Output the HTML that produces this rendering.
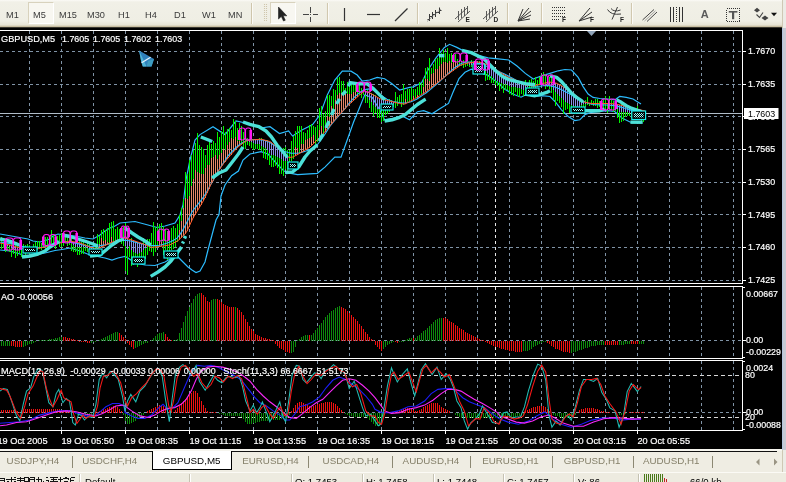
<!DOCTYPE html>
<html><head><meta charset="utf-8"><title>GBPUSD,M5</title>
<style>
html,body{margin:0;padding:0;}
#tb,#tabs,#status,svg{will-change:transform;}
body{width:786px;height:482px;overflow:hidden;background:#efede2;font-family:"Liberation Sans",sans-serif;font-size:9.2px;color:#222;position:relative;}
#tb{position:absolute;left:0;top:0;width:782px;height:28px;background:linear-gradient(#fbfaf6 0,#f1f0e7 2px,#efeee4 21px,#e6e3d4 25px,#c9bfa2 26.5px,#3a3830 27.5px,#000 28px);}
.tbt{position:absolute;top:9.5px;font-size:9.2px;color:#3a3a3a;line-height:10px;}
.pressed{position:absolute;top:2px;height:22px;box-sizing:border-box;border:1px solid #d8d2bd;border-right-color:#fff;border-bottom-color:#fff;background:#f8f7f1;}
.sep{position:absolute;top:3px;width:1px;height:21px;background:#cfc6ac;box-shadow:1px 0 0 #fbfaf6;}
#tabs{position:absolute;left:0;top:449px;width:782px;height:23px;background:#efede3;border-top:2px solid #f6f5ee;box-sizing:border-box;}
#tline{position:absolute;left:0;top:0;width:777px;height:1px;background:#111;}
.tab{position:absolute;top:5px;font-size:9.8px;color:#85806a;line-height:10px;}
.tsep{position:absolute;top:4.5px;width:1px;height:12px;background:#8c8873;}
#atab{position:absolute;left:152px;top:0px;width:80px;height:19px;box-sizing:border-box;background:#fff;border:1px solid #000;border-top:none;}
#status{position:absolute;left:0;top:472px;width:786px;height:10px;background:#edebe0;border-top:1px solid #fbfaf5;box-sizing:border-box;overflow:hidden;}
.st{position:absolute;top:4.2px;font-size:9.6px;color:#000;line-height:10px;}
.ssep{position:absolute;top:1px;width:1px;height:10px;background:#c5c2b2;box-shadow:1px 0 0 #fff;}
#redge{position:absolute;left:782px;top:0;width:4px;height:482px;background:#ecebe6;border-left:1px solid #cfc8b4;box-sizing:border-box;}
</style></head><body>
<div id="redge"></div>
<div id="tb">
 <span class="tbt" style="left:6px">M1</span>
 <div class="pressed" style="left:28px;width:26px"></div>
 <span class="tbt" style="left:33px">M5</span>
 <span class="tbt" style="left:59px">M15</span>
 <span class="tbt" style="left:87px">M30</span>
 <span class="tbt" style="left:118px">H1</span>
 <span class="tbt" style="left:145px">H4</span>
 <span class="tbt" style="left:174px">D1</span>
 <span class="tbt" style="left:202px">W1</span>
 <span class="tbt" style="left:228px">MN</span>
 <div class="sep" style="left:251px"></div>
 <div class="pressed" style="left:270px;width:26px"></div>
 <svg width="786" height="28" style="position:absolute;left:0;top:0" fill="none" stroke="#444" stroke-width="1.1">
  <path d="M264.5 4v18M266.5 4v18" stroke="#cfc6ac" stroke-dasharray="1 1"/>
  <path d="M278.5 7V19L281.3 16.4L283.5 21L285.3 20.2L283.2 15.8H286.8Z" fill="#222" stroke="#222" stroke-width="0.6"/>
  <path d="M310.5 7V12.5M310.5 16.5V22M303 14.5H308.5M312.5 14.5H318M310 14.5h1" stroke="#444" stroke-width="1" shape-rendering="crispEdges"/>
  <path d="M327.5 3V24" stroke="#cfc6ac"/><path d="M328.5 3V24" stroke="#fbfaf6"/>
  <path d="M344.5 8V21" stroke="#333" stroke-width="1.2"/>
  <path d="M367 14.5H380" stroke="#333" stroke-width="1.2"/>
  <path d="M395 21L407.5 8.5" stroke="#333" stroke-width="1.2"/>
  <path d="M417.5 3V24" stroke="#cfc6ac"/><path d="M418.5 3V24" stroke="#fbfaf6"/>
  <!-- channel icons -->
  <g stroke="#3a3a3a" stroke-width="1"><path d="M429.5 14V21M432.5 12V19M435.5 10V17M439.5 7.5V14M427.5 19.5h2M429.5 16.5h3M432.5 14.5h3M435.5 12.5h4M439.5 10.5h2"/><path d="M427 21.5L441 9" stroke="#777" stroke-width="0.6"/></g>
  <g stroke="#4a4a4a" stroke-width="0.9"><path d="M455 19L467 8M458 22L470 11M458.5 11v9M461.5 9v9M464.5 7v9M467.5 6v8"/></g>
  <g stroke="#4a4a4a" stroke-width="0.9"><path d="M483 19L495 8M486 22L498 11M486.5 11v9M489.5 9v9M492.5 7v9M495.5 6v8"/></g>
  <path d="M507.5 3V24" stroke="#cfc6ac"/><path d="M508.5 3V24" stroke="#fbfaf6"/>
  <g stroke="#333" stroke-width="1"><path d="M518 21L529 8M518 21L531 11M518 21L531 15M518 21L530 19M518 21L523 9"/></g>
  <path d="M541.5 3V24" stroke="#cfc6ac"/><path d="M542.5 3V24" stroke="#fbfaf6"/>
  <g stroke="#333" stroke-width="1" stroke-dasharray="1 1"><path d="M552 7.5H565M552 10.5H565M552 13.5H565M552 16.5H565M552 19.5H560"/></g>
  <g stroke="#333" stroke-width="1"><path d="M579 21L590 8M579 21L592 12M579 21L592 17"/></g>
  <g stroke="#3a3a3a" stroke-width="1"><path d="M607.5 9.5Q611 15.5 621 14M617.5 7L612 19.5M611 8.5Q614 12.5 620.5 10"/></g>
  <path d="M631.5 3V24" stroke="#cfc6ac"/><path d="M632.5 3V24" stroke="#fbfaf6"/>
  <g stroke="#444" stroke-width="1"><path d="M642.5 20L654 9.5M647 21.5L657 12"/><path d="M644.5 21L655.5 10.8" stroke="#888" stroke-width="0.7"/></g>
  <g stroke="#333" stroke-width="1"><path d="M670.5 7V22M673.5 7V22M679.5 7V22M682.5 7V22"/><path d="M676.5 7V22" stroke-dasharray="1 1"/></g>
  <g stroke="#333" stroke-width="1" stroke-dasharray="1 1" shape-rendering="crispEdges"><path d="M726.5 8.5H739.5V21.5H726.5Z"/></g>
  <path d="M728.8 11.8H737.4" stroke="#555" stroke-width="1.6"/><path d="M733.1 11V19.2" stroke="#555" stroke-width="2.2"/>
  <path d="M754 10.2L757 7.8L760 10.2L757 12.6ZM761.5 18L765 15.4L768.5 18L765 20.6Z" fill="#444" stroke="none"/>
  <path d="M756.5 14.5L759.5 17.5L763 12.5" stroke="#444"/>
  <path d="M771 12.8H777L774 16.2Z" fill="#111" stroke="none"/>
 </svg>
 <span class="tbt" style="left:700.8px;top:7.4px;font-size:11px;font-weight:bold;color:#5a5a5a;line-height:14px">A</span>
 <span class="tbt" style="left:465.5px;top:17px;font-size:6.5px;font-weight:bold;color:#222;line-height:6px">E</span>
 <span class="tbt" style="left:493.5px;top:17px;font-size:6.5px;font-weight:bold;color:#222;line-height:6px">D</span>
 <span class="tbt" style="left:562px;top:17px;font-size:6.5px;font-weight:bold;color:#222;line-height:6px">F</span>
 <span class="tbt" style="left:590px;top:17px;font-size:6.5px;font-weight:bold;color:#222;line-height:6px">F</span>
 <span class="tbt" style="left:620px;top:17px;font-size:6.5px;font-weight:bold;color:#222;line-height:6px">F</span>
</div>
<svg width="786" height="422" viewBox="0 28 786 422" style="position:absolute;left:0;top:28px">
<rect x="0" y="28" width="786" height="422" fill="#000"/>
<g stroke="#8093a6" stroke-width="1" stroke-dasharray="3 3" shape-rendering="crispEdges" fill="none">
<path d="M29.5 31V283M29.5 287V358M29.5 361V430M61.5 31V283M61.5 287V358M61.5 361V430M93.5 31V283M93.5 287V358M93.5 361V430M125.5 31V283M125.5 287V358M125.5 361V430M157.5 31V283M157.5 287V358M157.5 361V430M189.5 31V283M189.5 287V358M189.5 361V430M221.5 31V283M221.5 287V358M221.5 361V430M253.5 31V283M253.5 287V358M253.5 361V430M285.5 31V283M285.5 287V358M285.5 361V430M317.5 31V283M317.5 287V358M317.5 361V430M349.5 31V283M349.5 287V358M349.5 361V430M381.5 31V283M381.5 287V358M381.5 361V430M413.5 31V283M413.5 287V358M413.5 361V430M445.5 31V283M445.5 287V358M445.5 361V430M477.5 31V283M477.5 287V358M477.5 361V430M509.5 31V283M509.5 287V358M509.5 361V430M541.5 31V283M541.5 287V358M541.5 361V430M573.5 31V283M573.5 287V358M573.5 361V430M605.5 31V283M605.5 287V358M605.5 361V430M637.5 31V283M637.5 287V358M637.5 361V430M669.5 31V283M669.5 287V358M669.5 361V430M701.5 31V283M701.5 287V358M701.5 361V430M733.5 31V283M733.5 287V358M733.5 361V430M0 51.5H742M0 84.5H742M0 116.5H742M0 149.5H742M0 182.5H742M0 214.5H742M0 247.5H742M0 280.5H742M0 340.5H742M0 412.5H742"/>
</g>
<path d="M495.5 31V283M495.5 287V358M495.5 361V430" stroke="#e8e8e8" stroke-width="1" stroke-dasharray="3 3" shape-rendering="crispEdges"/>
<path d="M0 375.5H742M0 417.5H742" stroke="#d8d8d8" stroke-width="1" stroke-dasharray="4 3" shape-rendering="crispEdges"/>
<path d="M0 113.5H742" stroke="#b0bcc8" stroke-width="1" shape-rendering="crispEdges"/>
<polyline points="0,234 17,237 28,239 33,241 40,242 50,239 53,236 58,234 75,236 85,238 93,239 100,235 105,231 110,228 115,226 120,223 135,221.5 148,225 157,227.5 165,226 175,223 180,215 183,205 186,180 190,160 195,140 200,134.6 213,126.7 225,134.6 236,121 250,124 261,128 270,126.7 279.5,133.5 288.6,131 292.5,136 302.4,129.7 312.4,124.8 320,114.8 327.3,94.9 334.8,80 342.3,71.2 351,71.2 357.2,75 362.2,81.2 369.7,80 377.2,77.4 384.6,78.7 392,83.7 399.6,90 409.5,87.4 413.3,86.8 421.6,82.7 427.8,70.2 436,57.8 444.4,47.4 449.6,44.3 456.8,47.4 465,51.6 475.5,54.7 488,57.8 498.3,58.8 508.7,60 517,66 525.3,73.4 533.3,79 541.6,75.8 550,73.3 558.2,70.8 564.9,69.5 571.5,70 578.2,77.4 583.1,86.6 588.1,94 593.1,97.4 599.8,98.5 608,99 614.7,99.9 619.7,96.5 626.3,97.4 633,99 641,104" fill="none" stroke="#2cbcff" stroke-width="1.2"/>
<polyline points="0,250 10,251 20,254 28,257 35,255 45,253 55,250.5 62,249.5 70,248 80,251 90,255 100,257 105,258 112,260 118,258 125,256.5 128,258 135,263 145,265 155,265.5 165,262 172,258 178,257 183,262 188,267 192,270 196,272.5 200,271 205,262 208,250 212,235 216,220 219,214.5 221,196 225,185 231.6,175.7 238.4,171 243,160 250,154 261,151.7 268,154 277,164 284,171 291,173.4 297.5,174.6 317.4,173.3 324.9,167.1 334.8,157.1 341,157.1 347.3,139.7 353.5,122.3 359.7,107.3 364.7,94.9 372.2,97.4 379.6,109.8 384.6,119.8 392.1,118.5 402,116 409.5,119.8 411.2,118 417.4,111.7 423.7,110.7 432,113.8 440.2,108.6 448.5,103.4 452.7,93 459,78.5 465,72.3 471.3,69.2 479.6,72.3 488,75.4 496.2,81.6 504.5,88.9 512.8,94 521,97.2 529.4,93 535,96.5 541.6,95.7 550,96.5 555,101.5 561.5,109.8 568.2,116.5 574.8,120.6 579.8,119.8 584.8,114.8 591.4,112.3 599.8,111.5 608,110.6 614.7,111.5 622,118 630,122 641,123" fill="none" stroke="#2cbcff" stroke-width="1.2"/>
<path d="M1.5 236.7V249.2M3.5 241.5V248.4M5.5 239.3V251.9M7.5 242.5V250.8M9.5 245.7V252.2M11.5 243.3V257M13.5 239.5V254.1M15.5 242.5V257.7M17.5 244.5V256M19.5 246V253.3M21.5 247.1V256.5M23.5 244.2V252.9M25.5 245.3V255.9M27.5 243.6V252.2M29.5 244.7V254.2M31.5 247.4V251.4M33.5 243.8V251.2M35.5 242.3V252.2M37.5 241V249.9M39.5 240.5V249.4M41.5 242.6V249.6M43.5 242.9V247M45.5 236.8V250.1M47.5 237.2V250.6M49.5 238.5V245.8M51.5 230.3V248.1M53.5 235.2V246.2M55.5 237.1V248.8M57.5 236.4V244.3M59.5 234.8V246.6M61.5 232.9V247M63.5 234.9V245.6M65.5 234.3V241.8M67.5 235.6V245.6M69.5 236.3V245.4M71.5 237.4V250.7M73.5 242.1V251.5M75.5 239.9V251.9M77.5 242.4V254.9M79.5 240.5V254.7M81.5 242.1V253.5M83.5 241.8V254.2M85.5 243.9V250.5M87.5 243.1V251.6M89.5 242V252.4M91.5 247V255.5M93.5 243.6V254.3M95.5 243.8V251.6M97.5 234.1V249.8M99.5 235.6V246.1M101.5 230.1V242.2M103.5 229V244.5M105.5 229.9V241.9M107.5 228V242.4M109.5 223.2V245.7M111.5 222.1V239.7M113.5 220.6V242.7M115.5 228.8V242.5M117.5 227.4V239.7M119.5 229.3V240.9M121.5 231.9V244.1M123.5 227.2V245.6M125.5 223.1V270.8M127.5 228.6V275.4M129.5 239.2V256.6M131.5 237.8V266.2M133.5 245.6V264.6M135.5 250.5V264M137.5 250.3V266.7M139.5 245.5V263.1M141.5 248.3V263M143.5 238V257M145.5 239.8V259.4M147.5 239.1V254.8M149.5 239.1V251.3M151.5 233V251.9M153.5 222.1V255.5M155.5 226.7V252.1M157.5 225.5V246.5M159.5 224.2V242.9M161.5 222.5V244.1M163.5 226.8V254.6M165.5 228.6V250.4M167.5 230.9V259.6M169.5 232.8V257.6M171.5 228.1V249.7M173.5 226.4V249.3M175.5 227.7V247.1M177.5 223.8V242.2M179.5 215.2V236.3M181.5 208V227.2M183.5 198.6V211.8M185.5 171.6V203.4M187.5 173.5V201.1M189.5 159.6V198.3M191.5 155V193.6M193.5 150.3V180.1M195.5 143.4V179.7M197.5 133.2V179M199.5 144.5V178.4M201.5 146.7V181.2M203.5 149.4V180.8M205.5 155.2V178.4M207.5 145V166.5M209.5 142.1V171.6M211.5 143.6V161.5M213.5 141.4V159.8M215.5 142.6V160.4M217.5 132.1V164.6M219.5 136.6V159.4M221.5 131.3V155.2M223.5 126.2V153.7M225.5 131.6V156.7M227.5 128.5V153.6M229.5 127.6V144.4M231.5 129.6V143.9M233.5 118.6V143.5M235.5 121.2V141.3M237.5 127.9V144.6M239.5 123.2V141.7M241.5 126.3V145.1M243.5 132.2V148.6M245.5 131V148.7M247.5 137.8V145M249.5 139.4V146.4M251.5 134.5V148.3M253.5 139.2V150.3M255.5 141.4V149.2M257.5 142.7V148.9M259.5 138.4V149.7M261.5 137.8V151M263.5 144.6V157.7M265.5 145.9V159.1M267.5 139.5V159.7M269.5 143.8V165.4M271.5 149V166.7M273.5 151.6V167.2M275.5 143.7V166.1M277.5 151.1V167.7M279.5 153.9V173.5M281.5 151.9V173.5M283.5 147.9V175.9M285.5 146.8V169.1M287.5 150.3V171.7M289.5 150.1V167.6M291.5 140.9V160.7M293.5 136.1V159.1M295.5 131V152.6M297.5 126.3V150.9M299.5 125.6V154M301.5 125.5V150.7M303.5 132.2V148.5M305.5 133.2V143M307.5 129.7V142.9M309.5 125.2V140.7M311.5 123.7V139.9M313.5 126V138.6M315.5 127.1V144.2M317.5 125V141.8M319.5 107.5V132.6M321.5 106.3V130.3M323.5 114.4V134.6M325.5 110.8V126.7M327.5 94.6V120.7M329.5 95.2V117.7M331.5 96.1V111.7M333.5 88.5V110.8M335.5 89.9V107M337.5 77.7V99.7M339.5 76.9V99.1M341.5 81.2V93.8M343.5 81V96.6M345.5 88V99.2M347.5 82.1V94.8M349.5 87V96.6M351.5 82.4V96.5M353.5 84.1V94.2M355.5 84.1V96.9M357.5 82.1V94.1M359.5 85.3V94.5M361.5 87.8V97.5M363.5 89.1V95.3M365.5 92.4V102.9M367.5 88.6V102.5M369.5 89.8V107.8M371.5 93.3V112.3M373.5 93.8V115.8M375.5 95.4V113.3M377.5 106.1V117.5M379.5 105.5V118.1M381.5 96.2V122.2M383.5 98.5V120.5M385.5 97.5V114.8M387.5 99.6V113.9M389.5 98.6V111.5M391.5 100V108.5M393.5 102.4V106.9M395.5 92.3V108.4M397.5 97.1V106.3M399.5 94.8V103.1M401.5 94V106.9M403.5 83.6V104.8M405.5 90.5V101.8M407.5 88.7V101.9M409.5 89.3V101.4M411.5 86.7V101.5M413.5 89.1V97.8M415.5 88.5V98.1M417.5 87.1V95.8M419.5 81.9V95.4M421.5 83.4V94.2M423.5 78V88.5M425.5 68V83.3M427.5 66.8V83.1M429.5 58.1V83.4M431.5 67.6V76.3M433.5 63.5V77.5M435.5 58.6V73.1M437.5 58.1V70.6M439.5 48.4V71M441.5 53V64.8M443.5 50.3V64.3M445.5 52.5V68.3M447.5 48.1V67.1M449.5 54.3V61.5M451.5 52.9V65.5M453.5 54.2V61.9M455.5 53.9V63.1M457.5 58.7V63.6M459.5 60.3V64.8M461.5 60.5V65.7M463.5 59.5V67.7M465.5 62.1V66.8M467.5 60.1V66.4M469.5 63.3V67.3M471.5 59.8V67.3M473.5 60.9V68.1M475.5 62.1V70.7M477.5 62.9V72.1M479.5 61.4V71.9M481.5 66.4V73.8M483.5 63.2V74.5M485.5 69.2V80.5M487.5 70.2V80.4M489.5 63.4V79.9M491.5 72.3V83.2M493.5 71.9V82.7M495.5 76.8V84.7M497.5 75.4V85.7M499.5 76.7V91M501.5 81.1V88.5M503.5 75.4V92.9M505.5 79.8V90.2M507.5 78.8V89.5M509.5 77.6V93.7M511.5 79.9V94.5M513.5 82.7V95.8M515.5 85.7V91.9M517.5 83.9V96.1M519.5 82.5V97M521.5 87.9V94.4M523.5 81.9V95.7M525.5 80.2V94.9M527.5 83.7V91.2M529.5 79.8V92.7M531.5 78.7V90.6M533.5 81.2V90.5M535.5 76.7V87.6M537.5 79.6V87.1M539.5 77.3V84.8M541.5 74.7V84.9M543.5 72.3V86.4M545.5 73.8V88.8M547.5 80.6V86.8M549.5 77.1V88.5M551.5 76.4V92.6M553.5 79.5V100.1M555.5 89.4V105.7M557.5 83.7V100.8M559.5 92.4V102.9M561.5 87.4V107.1M563.5 98.1V114.1M565.5 93.9V109.8M567.5 90.8V108.9M569.5 102.3V113M571.5 98.1V112M573.5 102.7V111.7M575.5 102V114.2M577.5 99.8V113M579.5 98.9V109.7M581.5 100.7V109.7M583.5 100.5V108.3M585.5 100.1V107.3M587.5 96.7V104.9M589.5 102.8V106.3M591.5 99.9V104.7M593.5 100.9V106.1M595.5 99.2V106.1M597.5 99V107.5M599.5 101V106.9M601.5 101.9V106M603.5 99V110M605.5 95.5V108.8M607.5 103.3V112.7M609.5 96.3V108.8M611.5 99.4V110.2M613.5 100.8V111.7M615.5 104.5V110.8M617.5 106.2V118.1M619.5 106V123M621.5 100.7V121.7M623.5 109.9V120.8M625.5 110.6V117.4M627.5 110.8V116M629.5 110.2V116.3M631.5 107V117.5M633.5 108.4V116.7M635.5 109.9V120.1M637.5 105.5V117.5M639.5 112.6V117.8M641.5 109.7V122M643.5 112.9V121.7M645.5 111.6V119.6" stroke="#00f400" stroke-width="1" shape-rendering="crispEdges"/>
<path d="M99.5 243.7V248.1M101.5 238.4V247.3M103.5 241.1V246.4M105.5 239.8V245.5M107.5 241.5V244.5M111.5 236.5V242.6M159.5 239.8V246.6M161.5 241.6V246.3M179.5 229.8V239.7M181.5 220.9V237.7M183.5 207.7V235.8M185.5 198.3V233.8M187.5 199.1V231.1M189.5 195.9V226.7M191.5 185.8V222.4M193.5 178.9V218M195.5 169.6V214.7M197.5 172.1V211.4M199.5 172.6V208.1M201.5 173.5V204.8M203.5 174.4V201.4M205.5 167.9V197.5M207.5 164.8V193M209.5 164.8V188.6M211.5 158.4V184.1M213.5 156.9V180.5M215.5 155.3V177M217.5 158.6V173.4M219.5 155.4V170.2M221.5 152.7V167.3M223.5 149.2V164.3M225.5 150.1V161.7M227.5 145.4V159.3M229.5 142.2V156.9M231.5 137.8V154.5M233.5 138.5V152.3M235.5 137V150.2M237.5 140.9V148.1M239.5 140.7V146.2M295.5 147.4V155.9M297.5 148V154.9M301.5 144.3V152.5M303.5 144.3V151.3M305.5 140.1V150M307.5 139.4V148.8M309.5 138.3V147.6M311.5 136.9V146M313.5 135.1V144M319.5 130.2V138.1M321.5 126.1V136.1M325.5 125.2V131.6M327.5 116V129.2M329.5 116.9V126.8M331.5 106.4V124.4M333.5 109V122M335.5 99.8V119.6M337.5 95.1V117.4M339.5 93.2V115.2M341.5 92.5V113M343.5 93.4V110.7M345.5 94V108.5M347.5 93.6V106.3M349.5 93.7V104.5M351.5 94.3V102.7M353.5 92.4V100.9M355.5 92.3V99.1M357.5 93.6V97.3M405.5 99.4V104M413.5 95.8V99.8M417.5 94.6V97.5M423.5 87.3V93.7M425.5 79.3V92.4M427.5 78.7V91M429.5 80.5V89.3M431.5 73.7V87.7M433.5 72.8V86.1M435.5 69.3V84.5M437.5 68.5V82.9M439.5 66.4V81.3M441.5 63.6V79.7M443.5 62.3V78.2M445.5 62V76.6M447.5 62.6V75M449.5 60.7V73.5M451.5 62.5V72M453.5 60.2V70.5M455.5 60.8V69.1M457.5 62.9V67.7M459.5 63.7V66.4" stroke="#e8876a" stroke-width="1" shape-rendering="crispEdges"/>
<path d="M5.5 244V244.9M7.5 244.4V245.9M9.5 244.8V246.9M11.5 245.3V247.8M13.5 245.9V248.8M15.5 246.5V249.7M17.5 247.1V250.1M19.5 247.7V250M21.5 248.1V249.8M23.5 248.3V249.7M25.5 248.5V249.6M71.5 241.2V243M73.5 241.6V244.9M75.5 242V246.8M77.5 242.4V246.7M79.5 242.8V246.7M81.5 243.4V246.6M83.5 244.2V246.6M85.5 245V246.6M87.5 245.8V247.6M89.5 246.6V248.6M91.5 247.3V249.7M93.5 247.9V248.7M125.5 238V245.9M127.5 238.6V248.8M129.5 239.1V246.4M131.5 239.7V249.7M133.5 240.4V251.9M135.5 241.1V252.8M137.5 241.8V253.8M139.5 242.5V253.3M141.5 243.2V251.5M143.5 243.9V249.7M145.5 244.7V247.8M249.5 140.2V141.5M251.5 140V142.4M253.5 139.9V143.4M255.5 139.7V143.7M257.5 139.5V144.1M259.5 139.4V144.4M261.5 139.2V145.7M263.5 139.7V146.9M265.5 140.2V148.2M267.5 140.7V150.3M269.5 141.2V152.5M271.5 142.3V154.6M273.5 143.8V155.4M275.5 145.4V156.1M277.5 146.9V156.9M279.5 148.5V158M281.5 150.1V159.4M283.5 151.9V160.9M285.5 153.9V161.3M287.5 155.9V160.8M289.5 157.5V158.4M365.5 91.1V95.1M367.5 91.9V97.2M369.5 92.8V99.6M371.5 93.6V102.3M373.5 94.8V105M375.5 95.9V106.8M377.5 97.1V108.6M379.5 98.3V109.1M381.5 98.9V108.1M383.5 99.4V107.1M385.5 99.9V106M387.5 100.4V104.8M389.5 100.9V104.1M391.5 101.4V103.8M393.5 101.9V103.6M469.5 62.9V64.5M471.5 62.6V64.9M473.5 62.4V65.4M475.5 62.1V65.8M477.5 62.1V66.2M479.5 62.2V67.3M481.5 62.4V68.4M483.5 62.9V69.9M485.5 63.8V71.4M487.5 64.6V72.9M489.5 65.6V74.5M491.5 66.8V76.2M493.5 68.1V77.9M495.5 69.3V79.5M497.5 70.5V81M499.5 71.7V82.1M501.5 72.9V82.9M503.5 74.1V83.6M505.5 75.3V84.1M507.5 76.5V84.9M509.5 77.6V85.9M511.5 78.4V86.6M513.5 79.2V87M515.5 80V87.4M517.5 80.8V87.9M519.5 81.6V88.4M521.5 82.7V89M523.5 83.9V89.5M525.5 85V88M527.5 85.2V86.5M549.5 82V83.7M551.5 82.3V86.8M553.5 82.6V89.9M555.5 82.9V92.2M557.5 83.5V93.8M559.5 84.5V95.5M561.5 85.5V97.8M563.5 86.7V100.2M565.5 88V102M567.5 89.3V103.1M569.5 90.6V104.3M571.5 91.8V105.1M573.5 93V105.9M575.5 94.7V106.4M577.5 96.4V106.5M579.5 98.1V106.6M581.5 99.7V105.4M583.5 101V104.2M585.5 102.3V103.5M607.5 103.5V104.2M609.5 103.6V104.7M611.5 103.7V104.8M613.5 103.8V104.8M615.5 103.9V106.2M617.5 104.2V109M619.5 104.8V111.8M621.5 105.2V111.9M623.5 105.8V112.1M625.5 106.4V112.3M627.5 107V112.4M629.5 107.5V112.5M631.5 107.9V113M633.5 108.3V113.4M635.5 108.7V113.8M637.5 109.2V114.1M639.5 109.6V114.5M641.5 110V115M643.5 110.5V115.5M645.5 111V115.8" stroke="#8c8ce6" stroke-width="1" shape-rendering="crispEdges"/>
<polyline points="0,242.2 3,242.5 6,242.9 9,243.4 12,244 15,244.6 18,245.3 21,246.1 24,246.8 27,247.4 30,247.8 33,248.1 36,248 39,247.7 42,247.3 45,246.6 48,245.6 51,244.6 54,243.6 57,242.8 60,242.3 63,242 66,241.9 69,242.1 72,242.4 75,242.9 78,243.6 81,244.4 84,245.2 87,245.9 90,246.4 93,246.6 96,246.5 99,246 102,245.4 105,244.8 108,244.1 111,243.3 114,242.5 117,241.6 120,240.8 123,240.4 126,240.3 129,240.7 132,241.3 135,242.1 138,242.9 141,243.6 144,244.3 147,244.8 150,245.4 153,245.6 156,245.6 159,245.3 162,244.7 165,243.7 168,242.7 171,241.4 174,240 177,238.2 180,234.4 183,229.6 186,224.1 189,217.9 192,212 195,207.8 198,204.2 201,200.4 204,196.3 207,191.2 210,185.8 213,180.7 216,174.9 219,169.7 222,165.1 225,160.6 228,155.8 231,152.6 234,149.5 237,146.6 240,144.3 243,142.4 246,140.9 249,139.9 252,139.6 255,139.5 258,139.6 261,139.9 264,140.3 267,141.2 270,142.6 273,144.5 276,146.6 279,148.7 282,150.2 285,151.5 288,152.5 291,153.1 294,153.3 297,153.3 300,152.8 303,151.9 306,151 309,149.9 312,148.6 315,146.6 318,143.8 321,140 324,135.7 327,130.9 330,126.2 333,122.3 336,118.8 339,115.4 342,112 345,108.5 348,104.7 351,101 354,97.7 357,94.9 360,92.4 363,90.6 366,89.4 369,88.9 372,89.4 375,90.9 378,92.9 381,95.2 384,97.3 387,99.2 390,100.5 393,101.5 396,102 399,102.5 402,102.9 405,103 408,102.5 411,101.7 414,100.6 417,99 420,97 423,94.9 426,93 429,90.6 432,88.1 435,85.5 438,82.8 441,80.1 444,77.3 447,74.6 450,71.9 453,69.2 456,66.7 459,64.7 462,63.2 465,62.2 468,62 471,62.1 474,62.5 477,63.2 480,64.1 483,65.1 486,66.1 489,67.2 492,68.4 495,69.7 498,71.1 501,72.4 504,73.8 507,75.3 510,76.9 513,78.5 516,80.2 519,81.7 522,82.9 525,84 528,85 531,85.7 534,86.1 537,86.3 540,86.3 543,85.8 546,85.5 549,85.6 552,86.1 555,87 558,88.2 561,89.6 564,91 567,92.5 570,94.1 573,95.8 576,97.5 579,99.2 582,100.8 585,102.1 588,103.2 591,103.9 594,104.5 597,104.8 600,104.9 603,104.9 606,105 609,105.2 612,105.4 615,105.8 618,106.4 621,107.1 624,108 627,108.9 630,109.9 633,110.9 636,111.6 639,112.1" fill="none" stroke="#2cbcff" stroke-width="1.1"/>
<polyline points="0,243 10,245 20,248 30,249 40,248 50,246 60,243 70,241 80,243 90,247 97,249 104,246 110,243 118,240 125,238 132,240 143.3,244 151.6,247.4 159.9,246.5 169.8,244.9 178,240.7 186.4,232.4 193,218 199.7,207 204,199.7 211.2,183.7 217.8,172 223.6,163.4 230.8,154.7 238,147 244,142.3 247.5,140.3 261,139.2 270,141.5 281.7,150.6 288.6,157.5 293,157 297.5,154.6 310,147 322.4,134.7 334.8,119.8 347.3,106 359.7,94.9 364.7,91 371,93.6 379.6,98.6 389.6,101 399.6,103.6 405,104 415.4,98.5 425.7,92 436,83.7 446.5,75.4 454.8,69.2 461,65 468,63 476,62 482,62.5 488,65 498.3,71.3 508.7,77.5 519,81.6 525,85 533,86 541,84 549,82 556,83 562,86 568,90 573,93 580,99 585,102.3 592,103.5 600,103.5 608,103.5 616,104 622,105.5 628,107.3 634,108.5 640,109.8 645,111" fill="none" stroke="#ff5a28" stroke-width="1"/>
<polyline points="0,239 7,240.5 12,242 17,244 21,245.7" fill="none" stroke="#4ce0d8" stroke-width="3.4" stroke-linecap="butt" stroke-linejoin="round"/>
<polyline points="22,257 30,256 38,254 45,251 50,247 55,244 59,241.5" fill="none" stroke="#4ce0d8" stroke-width="3.4" stroke-linecap="butt" stroke-linejoin="round"/>
<polyline points="62,235 70,236.5 78,239 86,241.5 93,244 98,246" fill="none" stroke="#4ce0d8" stroke-width="3.4" stroke-linecap="butt" stroke-linejoin="round"/>
<polyline points="90,256 100,255 106,250 112,245 118,241 124,239" fill="none" stroke="#4ce0d8" stroke-width="3.4" stroke-linecap="butt" stroke-linejoin="round"/>
<polyline points="125,228 132,233 138,237 145,241 150.7,245" fill="none" stroke="#4ce0d8" stroke-width="3.4" stroke-linecap="butt" stroke-linejoin="round"/>
<polyline points="150.7,276.4 158,272 165,267 171,261 177,253 181.5,247" fill="none" stroke="#4ce0d8" stroke-width="3.4" stroke-linecap="butt" stroke-linejoin="round"/>
<polyline points="182.5,243.5 183.5,241.5" fill="none" stroke="#4ce0d8" stroke-width="3.4" stroke-linecap="butt" stroke-linejoin="round"/>
<polyline points="184.5,238.5 185.5,236" fill="none" stroke="#4ce0d8" stroke-width="3.4" stroke-linecap="butt" stroke-linejoin="round"/>
<polyline points="200.8,137 206,139 212.2,141.5" fill="none" stroke="#4ce0d8" stroke-width="3.4" stroke-linecap="butt" stroke-linejoin="round"/>
<polyline points="212,178 219,173 226,170 231.5,163 238.4,154 243,147" fill="none" stroke="#4ce0d8" stroke-width="3.4" stroke-linecap="butt" stroke-linejoin="round"/>
<polyline points="243,122 250,124.4 259,126.7 266,131 271.5,137 277,145 283,152 287.4,157.5" fill="none" stroke="#4ce0d8" stroke-width="3.4" stroke-linecap="butt" stroke-linejoin="round"/>
<polyline points="285,172.5 292.5,172 298.7,167 305,157 310,151 317.4,144.7" fill="none" stroke="#4ce0d8" stroke-width="3.4" stroke-linecap="butt" stroke-linejoin="round"/>
<polyline points="319,141 323,134" fill="none" stroke="#4ce0d8" stroke-width="3.4" stroke-linecap="butt" stroke-linejoin="round"/>
<polyline points="326,128 329,121" fill="none" stroke="#4ce0d8" stroke-width="3.4" stroke-linecap="butt" stroke-linejoin="round"/>
<polyline points="331.5,115 334,109" fill="none" stroke="#4ce0d8" stroke-width="3.4" stroke-linecap="butt" stroke-linejoin="round"/>
<polyline points="336.5,104 339.5,99" fill="none" stroke="#4ce0d8" stroke-width="3.4" stroke-linecap="butt" stroke-linejoin="round"/>
<polyline points="342,95 346,91" fill="none" stroke="#4ce0d8" stroke-width="3.4" stroke-linecap="butt" stroke-linejoin="round"/>
<polyline points="348,86 351,82.5" fill="none" stroke="#4ce0d8" stroke-width="3.4" stroke-linecap="butt" stroke-linejoin="round"/>
<polyline points="348.5,82.4 357,83.7 367,83.7 373.4,88.6 379.6,94.9 384.6,99.9" fill="none" stroke="#4ce0d8" stroke-width="3.4" stroke-linecap="butt" stroke-linejoin="round"/>
<polyline points="384.6,121 392,119.8 399.6,117.3 405,114.8 411.2,109.6 417.4,104.5 423.7,100.3 425.7,99.3" fill="none" stroke="#4ce0d8" stroke-width="3.4" stroke-linecap="butt" stroke-linejoin="round"/>
<polyline points="439,55.7 444.4,55.7" fill="none" stroke="#4ce0d8" stroke-width="3.4" stroke-linecap="butt" stroke-linejoin="round"/>
<polyline points="462,50.5 471.3,52.6 477.6,55.7 483.8,58.8 490,65 496.2,71.3 502.4,76.5 508.7,79.6 517,81.6 525.3,83.7 535,84.8" fill="none" stroke="#4ce0d8" stroke-width="3.4" stroke-linecap="butt" stroke-linejoin="round"/>
<polyline points="525,94 535,95.7 541.6,94 546.6,92.4 550,90.7" fill="none" stroke="#4ce0d8" stroke-width="3.4" stroke-linecap="butt" stroke-linejoin="round"/>
<polyline points="550,75.8 556.6,77.4 561.5,81.6 566.5,87.4 571.5,93.2 576.5,97.4 581.5,100.7 583,102.3" fill="none" stroke="#4ce0d8" stroke-width="3.4" stroke-linecap="butt" stroke-linejoin="round"/>
<polyline points="573,112.3 581.5,110.7 591.4,110.7 599.8,110.7 604.7,109" fill="none" stroke="#4ce0d8" stroke-width="3.4" stroke-linecap="butt" stroke-linejoin="round"/>
<polyline points="616.4,99.8 621.3,102.3 626.3,105.7 631.3,108.2 636.3,109.8 641.3,111.5" fill="none" stroke="#4ce0d8" stroke-width="3.4" stroke-linecap="butt" stroke-linejoin="round"/>
<polyline points="630.4,122.2 642.7,122.2" fill="none" stroke="#4ce0d8" stroke-width="3.4" stroke-linecap="butt" stroke-linejoin="round"/>
<defs><pattern id="hx" width="2" height="2" patternUnits="userSpaceOnUse"><rect width="2" height="2" fill="#000"/><rect width="1" height="1" fill="#9ff"/><rect x="1" y="1" width="1" height="1" fill="#9ff"/></pattern></defs>
<rect x="89" y="249" width="13" height="6" fill="#000" stroke="#18ecec" stroke-width="1.2"/>
<rect x="91" y="251" width="9" height="2" fill="url(#hx)"/>
<rect x="23" y="247" width="14" height="6" fill="#000" stroke="#18ecec" stroke-width="1.2"/>
<rect x="25" y="249" width="10" height="2" fill="url(#hx)"/>
<rect x="132" y="257" width="13" height="7" fill="#000" stroke="#18ecec" stroke-width="1.2"/>
<rect x="134" y="259" width="9" height="3" fill="url(#hx)"/>
<rect x="164" y="251" width="14" height="7" fill="#000" stroke="#18ecec" stroke-width="1.2"/>
<rect x="166" y="253" width="10" height="3" fill="url(#hx)"/>
<rect x="288" y="162" width="10" height="7" fill="#000" stroke="#18ecec" stroke-width="1.2"/>
<rect x="290" y="164" width="6" height="3" fill="url(#hx)"/>
<rect x="381" y="104" width="12" height="6" fill="#000" stroke="#18ecec" stroke-width="1.2"/>
<rect x="383" y="106" width="8" height="2" fill="url(#hx)"/>
<rect x="473" y="64" width="11.5" height="10" fill="#000" stroke="#18ecec" stroke-width="1.2"/>
<rect x="475" y="66" width="7.5" height="6" fill="url(#hx)"/>
<rect x="526" y="88" width="13" height="7" fill="#000" stroke="#18ecec" stroke-width="1.2"/>
<rect x="528" y="90" width="9" height="3" fill="url(#hx)"/>
<rect x="571" y="107" width="14" height="6" fill="#000" stroke="#18ecec" stroke-width="1.2"/>
<rect x="573" y="109" width="10" height="2" fill="url(#hx)"/>
<rect x="631.8" y="111" width="13.8" height="8.5" fill="#000" stroke="#18ecec" stroke-width="1.2"/>
<rect x="633.8" y="113" width="9.8" height="4.5" fill="url(#hx)"/>
<rect x="5.5" y="238" width="7.5" height="12" rx="2.5" fill="none" stroke="#ff18f0" stroke-width="1.1"/>
<rect x="13.5" y="238" width="7.5" height="12" rx="2.5" fill="none" stroke="#ff18f0" stroke-width="1.1"/>
<rect x="4" y="240" width="2.6" height="10" fill="#ff18f0"/>
<rect x="19.4" y="240" width="2.6" height="9" fill="#ff18f0"/>
<rect x="43.5" y="234.5" width="6" height="11" rx="2.5" fill="none" stroke="#ff18f0" stroke-width="1.1"/>
<rect x="50" y="234.5" width="6" height="11" rx="2.5" fill="none" stroke="#ff18f0" stroke-width="1.1"/>
<rect x="42" y="236.5" width="2.6" height="9" fill="#ff18f0"/>
<rect x="54.4" y="236.5" width="2.6" height="8" fill="#ff18f0"/>
<rect x="63.5" y="231" width="6.5" height="12" rx="2.5" fill="none" stroke="#ff18f0" stroke-width="1.1"/>
<rect x="70.5" y="231" width="6.5" height="12" rx="2.5" fill="none" stroke="#ff18f0" stroke-width="1.1"/>
<rect x="62" y="233" width="2.6" height="10" fill="#ff18f0"/>
<rect x="75.4" y="233" width="2.6" height="9" fill="#ff18f0"/>
<rect x="121.5" y="226" width="3.5" height="12" rx="2.5" fill="none" stroke="#ff18f0" stroke-width="1.1"/>
<rect x="125.5" y="226" width="3.5" height="12" rx="2.5" fill="none" stroke="#ff18f0" stroke-width="1.1"/>
<rect x="120" y="228" width="2.6" height="10" fill="#ff18f0"/>
<rect x="127.4" y="228" width="2.6" height="9" fill="#ff18f0"/>
<rect x="158.5" y="229" width="5" height="12" rx="2.5" fill="none" stroke="#ff18f0" stroke-width="1.1"/>
<rect x="164" y="229" width="5" height="12" rx="2.5" fill="none" stroke="#ff18f0" stroke-width="1.1"/>
<rect x="157" y="231" width="2.6" height="10" fill="#ff18f0"/>
<rect x="167.4" y="231" width="2.6" height="9" fill="#ff18f0"/>
<rect x="239.5" y="128" width="5.5" height="12" rx="2.5" fill="none" stroke="#ff18f0" stroke-width="1.1"/>
<rect x="245.5" y="128" width="5.5" height="12" rx="2.5" fill="none" stroke="#ff18f0" stroke-width="1.1"/>
<rect x="238" y="130" width="2.6" height="10" fill="#ff18f0"/>
<rect x="249.4" y="130" width="2.6" height="9" fill="#ff18f0"/>
<rect x="357.5" y="82" width="6.5" height="10" rx="2.5" fill="none" stroke="#ff18f0" stroke-width="1.1"/>
<rect x="364.5" y="82" width="6.5" height="10" rx="2.5" fill="none" stroke="#ff18f0" stroke-width="1.1"/>
<rect x="356" y="84" width="2.6" height="8" fill="#ff18f0"/>
<rect x="369.4" y="84" width="2.6" height="7" fill="#ff18f0"/>
<rect x="453.5" y="53" width="6.5" height="9" rx="2.5" fill="none" stroke="#ff18f0" stroke-width="1.1"/>
<rect x="460.5" y="53" width="6.5" height="9" rx="2.5" fill="none" stroke="#ff18f0" stroke-width="1.1"/>
<rect x="452" y="55" width="2.6" height="7" fill="#ff18f0"/>
<rect x="465.4" y="55" width="2.6" height="6" fill="#ff18f0"/>
<rect x="475.5" y="59" width="6.5" height="11" rx="2.5" fill="none" stroke="#ff18f0" stroke-width="1.1"/>
<rect x="482.5" y="59" width="6.5" height="11" rx="2.5" fill="none" stroke="#ff18f0" stroke-width="1.1"/>
<rect x="474" y="61" width="2.6" height="9" fill="#ff18f0"/>
<rect x="487.4" y="61" width="2.6" height="8" fill="#ff18f0"/>
<rect x="541.5" y="75" width="6" height="10" rx="2.5" fill="none" stroke="#ff18f0" stroke-width="1.1"/>
<rect x="548" y="75" width="6" height="10" rx="2.5" fill="none" stroke="#ff18f0" stroke-width="1.1"/>
<rect x="540" y="77" width="2.6" height="8" fill="#ff18f0"/>
<rect x="552.4" y="77" width="2.6" height="7" fill="#ff18f0"/>
<rect x="601.5" y="99" width="7" height="11" rx="2.5" fill="none" stroke="#ff18f0" stroke-width="1.1"/>
<rect x="609" y="99" width="7" height="11" rx="2.5" fill="none" stroke="#ff18f0" stroke-width="1.1"/>
<rect x="600" y="101" width="2.6" height="9" fill="#ff18f0"/>
<rect x="614.4" y="101" width="2.6" height="8" fill="#ff18f0"/>
<path d="M1.5 340.5V346.2M3.5 340.5V346M5.5 340.5V345.9M7.5 340.5V345.8M9.5 340.5V345.7M23.5 340.5V346.5M25.5 340.5V345.8M27.5 340.5V345M29.5 340.5V344.2M31.5 340.5V343.5M33.5 340.5V342.6M35.5 340.5V341.7M37.5 340.5V341.1M39.5 340V341.1M41.5 340V341.1M43.5 339.9V341.1M45.5 339.8V340.5M47.5 339.6V340.5M49.5 339.4V340.5M51.5 339.1V340.5M53.5 338.7V340.5M55.5 338.1V340.5M57.5 337.5V340.5M59.5 337.1V340.5M61.5 336.7V340.5M91.5 340.5V342.6M93.5 340.5V342.3M95.5 340.5V342M97.5 340.5V341.3M99.5 340V341.1M101.5 339.4V340.5M103.5 338.1V340.5M105.5 336.9V340.5M107.5 335.6V340.5M109.5 334.5V340.5M111.5 333.5V340.5M113.5 332.7V340.5M115.5 332.2V340.5M117.5 331.9V340.5M135.5 340.5V347.5M137.5 340.5V346.5M139.5 340.5V345.7M141.5 340.5V344.9M143.5 340.5V344.1M145.5 340.5V343.3M147.5 340.5V342.5M149.5 340.5V341.2M151.5 339.5V340.5M153.5 337.5V340.5M155.5 335.9V340.5M157.5 334.3V340.5M159.5 333.2V340.5M161.5 332.6V340.5M163.5 332V340.5M173.5 340V341.1M175.5 340V341.1M177.5 338.5V340.5M179.5 333.2V340.5M181.5 327.5V340.5M183.5 321.5V340.5M185.5 316V340.5M187.5 311V340.5M189.5 306.5V340.5M191.5 302.5V340.5M193.5 299V340.5M195.5 296V340.5M197.5 293.9V340.5M199.5 292.6V340.5M211.5 300.2V340.5M213.5 299.2V340.5M215.5 298.8V340.5M235.5 306.8V340.5M291.5 340.5V352.8M293.5 340.5V351.5M295.5 340.5V346.8M297.5 340V341.1M299.5 338.5V340.5M301.5 337V340.5M303.5 335.5V340.5M305.5 335V340.5M307.5 334.5V340.5M311.5 334.5V340.5M313.5 332.5V340.5M315.5 330.1V340.5M317.5 327.7V340.5M319.5 325.2V340.5M321.5 322.5V340.5M323.5 319.8V340.5M325.5 317.3V340.5M327.5 315V340.5M329.5 312.7V340.5M331.5 310.8V340.5M333.5 309.5V340.5M335.5 308.2V340.5M337.5 307.1V340.5M339.5 306.4V340.5M383.5 340.5V348.5M385.5 340.5V346.5M387.5 340.5V345M389.5 340.5V343.5M391.5 340.5V342.5M393.5 340.5V341.5M399.5 340.5V342M401.5 340.5V341.5M403.5 340.5V341.6M405.5 340V341.1M407.5 339V340.5M409.5 338V340.5M411.5 337.8V340.5M415.5 337.8V340.5M417.5 336.2V340.5M419.5 334.7V340.5M421.5 333V340.5M423.5 331.3V340.5M425.5 329.5V340.5M427.5 327.5V340.5M429.5 325.5V340.5M431.5 323.7V340.5M433.5 322V340.5M435.5 320.3V340.5M437.5 319.1V340.5M439.5 318.3V340.5M441.5 317.5V340.5M523.5 340.5V351.3M525.5 340.5V351M527.5 340.5V350.7M529.5 340.5V349.8M531.5 340.5V348.5M533.5 340.5V347.2M535.5 340.5V346M537.5 340.5V345M539.5 340.5V344M541.5 340.5V343.1M543.5 340.5V342.3M545.5 340.5V341.5M571.5 340.5V352.8M573.5 340.5V352.2M575.5 340.5V351.8M577.5 340.5V351.1M579.5 340.5V350.4M581.5 340.5V349.6M583.5 340.5V348.9M585.5 340.5V348.2M587.5 340.5V347.6M589.5 340.5V346.9M591.5 340.5V346.3M593.5 340.5V345.9M595.5 340.5V345.6M597.5 340.5V345.4M599.5 340.5V345.1M601.5 340.5V344.8M603.5 340.5V344.5M619.5 340.5V345.3M621.5 340.5V345M623.5 340.5V344.7M625.5 340.5V344.4M627.5 340.5V344.2M629.5 340.5V344.1M639.5 340.5V344.2M641.5 340.5V344.1M643.5 340.5V344" stroke="#0c8c0c" stroke-width="1" shape-rendering="crispEdges"/>
<path d="M11.5 340.5V346.1M13.5 340.5V346.3M15.5 340.5V346.6M17.5 340.5V346.7M19.5 340.5V346.8M21.5 340.5V346.9M63.5 336.8V340.5M65.5 337.2V340.5M67.5 337.7V340.5M69.5 338.2V340.5M71.5 338.8V340.5M73.5 339.2V340.5M75.5 339.8V340.5M77.5 340V341.1M79.5 340.5V341.6M81.5 340.5V341.5M83.5 340.5V342M85.5 340.5V342.3M87.5 340.5V342.6M89.5 340.5V342.6M119.5 332.8V340.5M121.5 334.5V340.5M123.5 336.5V340.5M125.5 339V340.5M127.5 340.5V342.5M129.5 340.5V345.3M131.5 340.5V346.9M133.5 340.5V348.5M165.5 334.3V340.5M167.5 336.5V340.5M169.5 338.5V340.5M171.5 340V341.1M201.5 292.9V340.5M203.5 294.6V340.5M205.5 297.2V340.5M207.5 300.8V340.5M209.5 301.8V340.5M217.5 299V340.5M219.5 300V340.5M221.5 301.5V340.5M223.5 303.5V340.5M225.5 305V340.5M227.5 306V340.5M229.5 306.8V340.5M231.5 307.2V340.5M233.5 307.2V340.5M237.5 307.5V340.5M239.5 309.5V340.5M241.5 312.1V340.5M243.5 315.3V340.5M245.5 318.5V340.5M247.5 322.1V340.5M249.5 325.7V340.5M251.5 328.7V340.5M253.5 331.1V340.5M255.5 333.5V340.5M257.5 334.7V340.5M259.5 335.9V340.5M261.5 336.8V340.5M263.5 337.5V340.5M265.5 338.2V340.5M267.5 338.8V340.5M269.5 339.2V340.5M271.5 339.8V340.5M273.5 340V341.1M275.5 340.5V343.5M277.5 340.5V345.5M279.5 340.5V347.5M281.5 340.5V349.1M283.5 340.5V350.3M285.5 340.5V351.5M287.5 340.5V352.3M289.5 340.5V353.1M309.5 335.2V340.5M341.5 306.6V340.5M343.5 307.9V340.5M345.5 309.3V340.5M347.5 311V340.5M349.5 312.7V340.5M351.5 314.5V340.5M353.5 316.5V340.5M355.5 318.5V340.5M357.5 320.8V340.5M359.5 323.5V340.5M361.5 326.2V340.5M363.5 328.8V340.5M365.5 331.5V340.5M367.5 334.2V340.5M369.5 336.5V340.5M371.5 338.5V340.5M373.5 340V341.1M375.5 340.5V344.5M377.5 340.5V347.2M379.5 340.5V349.2M381.5 340.5V350.5M395.5 340.5V342M397.5 340.5V342.5M413.5 338.2V340.5M443.5 317.9V340.5M445.5 318.3V340.5M447.5 319.2V340.5M449.5 320.5V340.5M451.5 321.8V340.5M453.5 323.2V340.5M455.5 324.8V340.5M457.5 326.2V340.5M459.5 327.8V340.5M461.5 329.1V340.5M463.5 330.4V340.5M465.5 331.6V340.5M467.5 332.9V340.5M469.5 334V340.5M471.5 335V340.5M473.5 336V340.5M475.5 337V340.5M477.5 337.9V340.5M479.5 338.8V340.5M481.5 339.6V340.5M483.5 340V341.1M485.5 340.5V341.8M487.5 340.5V343M489.5 340.5V344M491.5 340.5V345M493.5 340.5V345.9M495.5 340.5V346.6M497.5 340.5V347.4M499.5 340.5V348.1M501.5 340.5V348.8M503.5 340.5V349.2M505.5 340.5V349.8M507.5 340.5V350.2M509.5 340.5V350.6M511.5 340.5V350.9M513.5 340.5V351.2M515.5 340.5V351.5M517.5 340.5V351.5M519.5 340.5V351.5M521.5 340.5V351.5M547.5 340.5V342.8M549.5 340.5V344.2M551.5 340.5V345.6M553.5 340.5V347.1M555.5 340.5V348.5M557.5 340.5V349.4M559.5 340.5V350.2M561.5 340.5V351.1M563.5 340.5V351.7M565.5 340.5V352.1M567.5 340.5V352.4M569.5 340.5V352.8M605.5 340.5V344.5M607.5 340.5V344.5M609.5 340.5V344.5M611.5 340.5V344.6M613.5 340.5V344.9M615.5 340.5V345.1M617.5 340.5V345.4M631.5 340.5V344.1M633.5 340.5V344.2M635.5 340.5V344.4M637.5 340.5V344.4" stroke="#f01010" stroke-width="1" shape-rendering="crispEdges"/>
<path d="M73.5 412.5V413.5M75.5 412.5V414.1M77.5 412.5V414.6M79.5 412.5V415.2M81.5 412.5V415.5M83.5 412.5V415.5M85.5 412.5V415.5M87.5 412.5V415.5M89.5 412.5V415.5M91.5 412.5V414.8M93.5 412.5V413.5M95.5 412.5V412.8M123.5 412.5V415M125.5 412.5V421M127.5 412.5V424.2M129.5 412.5V423.5M131.5 412.5V422.8M133.5 412.5V421.9M135.5 412.5V420.6M137.5 412.5V419.4M139.5 412.5V418.1M141.5 412.5V416.5M143.5 412.5V414.5M217.5 412.5V412.8M219.5 412.5V413.5M221.5 412.5V414.2M223.5 412.5V414.8M225.5 412.5V415.5M227.5 412.5V415.5M229.5 412.5V415.5M231.5 412.5V415.5M233.5 412.5V415.5M235.5 412.5V415.5M237.5 412.5V415.5M239.5 412.5V415.5M241.5 412.5V416.8M243.5 412.5V419.2M245.5 412.5V421.5M247.5 412.5V423.5M249.5 412.5V424.2M251.5 412.5V423.8M253.5 412.5V423.2M255.5 412.5V422.8M257.5 412.5V422.2M259.5 412.5V421.8M261.5 412.5V421.4M263.5 412.5V421.2M265.5 412.5V421M267.5 412.5V420.8M269.5 412.5V420.6M271.5 412.5V420.4M273.5 412.5V420.2M275.5 412.5V420M277.5 412.5V419.8M279.5 412.5V419.6M281.5 412.5V419.2M283.5 412.5V418.8M285.5 412.5V418.2M287.5 412.5V417.8M289.5 412.5V415M345.5 412.5V413.5M347.5 412.5V414.8M349.5 412.5V415.5M351.5 412.5V416.2M353.5 412.5V416.5M355.5 412.5V416.5M357.5 412.5V416.5M359.5 412.5V416.5M361.5 412.5V416.5M363.5 412.5V416.5M365.5 412.5V416.5M367.5 412.5V418.1M369.5 412.5V419.7M371.5 412.5V421.5M373.5 412.5V423.5M375.5 412.5V425.5M377.5 412.5V425.9M379.5 412.5V426.3M381.5 412.5V423.8M383.5 412.5V418.2M455.5 412.5V415.2M457.5 412.5V416.1M459.5 412.5V417M461.5 412.5V417.6M463.5 412.5V417.6M465.5 412.5V417.8M467.5 412.5V417.9M469.5 412.5V417.9M471.5 412.5V418.1M473.5 412.5V418.1M475.5 412.5V418.2M477.5 412.5V418.4M479.5 412.5V418.4M481.5 412.5V418.4M483.5 412.5V418.4M485.5 412.5V418.2M487.5 412.5V418.1M489.5 412.5V418.1M491.5 412.5V417.9M493.5 412.5V417.9M495.5 412.5V417.8M497.5 412.5V417.6M499.5 412.5V417.6M501.5 412.5V417.4M503.5 412.5V417.3M505.5 412.5V417.2M507.5 412.5V417M509.5 412.5V416.9M511.5 412.5V416.8M513.5 412.5V416.6M515.5 412.5V416.5M517.5 412.5V416.2M519.5 412.5V416M521.5 412.5V415.8M523.5 412.5V415.5M553.5 412.5V414.9M555.5 412.5V415.6M557.5 412.5V416.4M559.5 412.5V417.1M561.5 412.5V417.5M563.5 412.5V417.5M565.5 412.5V417.5M567.5 412.5V417.5M569.5 412.5V417.5M571.5 412.5V416.9M573.5 412.5V415.7M575.5 412.5V414.5M619.5 412.5V414.5M621.5 412.5V414.5M623.5 412.5V414.5M625.5 412.5V413.5" stroke="#0c8c0c" stroke-width="1" shape-rendering="crispEdges"/>
<path d="M1.5 409.5V412.5M3.5 409.5V412.5M5.5 409.5V412.5M7.5 409.5V412.5M9.5 409.5V412.5M11.5 409.5V412.5M13.5 409.5V412.5M15.5 409.5V412.5M17.5 411V412.5M19.5 411.5V412.5M21.5 409.5V412.5M23.5 409.4V412.5M25.5 409.3V412.5M27.5 409.2V412.5M29.5 409.1V412.5M31.5 409V412.5M33.5 408.9V412.5M35.5 408.8V412.5M37.5 408.7V412.5M39.5 408.6V412.5M41.5 408.6V412.5M43.5 408.6V412.5M45.5 408.8V412.5M47.5 408.9V412.5M49.5 408.9V412.5M51.5 409.1V412.5M53.5 409.1V412.5M55.5 409.2V412.5M57.5 409.4V412.5M59.5 409.4V412.5M61.5 409.5V412.5M63.5 409.5V412.5M65.5 409.5V412.5M67.5 409.5V412.5M69.5 409.5V412.5M71.5 409.5V412.5M97.5 411.9V412.5M99.5 410.9V412.5M101.5 410.1V412.5M103.5 409.3V412.5M105.5 408.5V412.5M107.5 408V412.5M109.5 407.4V412.5M111.5 406.9V412.5M113.5 406.3V412.5M115.5 405.8V412.5M117.5 406.5V412.5M119.5 408.5V412.5M121.5 411V412.5M147.5 411.2V412.5M149.5 410V412.5M151.5 408.7V412.5M153.5 407.5V412.5M155.5 406.6V412.5M157.5 405.8V412.5M159.5 404.9V412.5M161.5 405V412.5M163.5 406V412.5M165.5 407V412.5M167.5 408.2V412.5M169.5 409.8V412.5M171.5 410.8V412.5M173.5 411.5V412.5M175.5 410.1V412.5M177.5 407.8V412.5M179.5 405.6V412.5M181.5 403.3V412.5M183.5 401V412.5M185.5 398.7V412.5M187.5 396.5V412.5M189.5 394.5V412.5M191.5 392.5V412.5M193.5 390.5V412.5M195.5 390.5V412.5M197.5 392.5V412.5M199.5 396.5V412.5M201.5 400.5V412.5M203.5 404.5V412.5M205.5 407.9V412.5M207.5 410.6V412.5M209.5 411.6V412.5M211.5 411.7V412.5M213.5 411.8V412.5M215.5 412.2V412.5M291.5 410.5V412.5M293.5 407.5V412.5M295.5 404.5V412.5M297.5 403.2V412.5M299.5 401.9V412.5M301.5 402.1V412.5M303.5 403V412.5M305.5 403.9V412.5M307.5 404.8V412.5M309.5 405.6V412.5M311.5 406.5V412.5M313.5 405.7V412.5M315.5 404.9V412.5M317.5 404.2V412.5M319.5 403.8V412.5M321.5 403.2V412.5M323.5 402.8V412.5M325.5 402.4V412.5M327.5 402.1V412.5M329.5 401.8V412.5M331.5 401.5V412.5M333.5 402.7V412.5M335.5 403.9V412.5M337.5 405.5V412.5M339.5 407.5V412.5M341.5 409.5V412.5M343.5 411.5V412.5M387.5 411.9V412.5M389.5 411.7V412.5M391.5 411.6V412.5M393.5 411.5V412.5M395.5 411.3V412.5M397.5 411.2V412.5M399.5 411.1V412.5M401.5 410.4V412.5M403.5 409.1V412.5M405.5 408.2V412.5M407.5 407.8V412.5M409.5 408V412.5M411.5 409V412.5M413.5 410.2V412.5M415.5 410.9V412.5M417.5 410.6V412.5M419.5 409.8V412.5M421.5 408.5V412.5M423.5 407.2V412.5M425.5 406V412.5M427.5 405V412.5M429.5 404V412.5M431.5 403.2V412.5M433.5 402.8V412.5M435.5 402.5V412.5M437.5 402.5V412.5M439.5 404.5V412.5M441.5 406.5V412.5M443.5 407.7V412.5M445.5 408.9V412.5M447.5 410.1V412.5M449.5 411.3V412.5M525.5 411.2V412.5M527.5 410.1V412.5M529.5 409V412.5M531.5 408.1V412.5M533.5 407.4V412.5M535.5 406.6V412.5M537.5 405.9V412.5M539.5 405.5V412.5M541.5 405.5V412.5M543.5 405.5V412.5M545.5 407.1V412.5M547.5 408.7V412.5M549.5 410.5V412.5M579.5 410.1V412.5M581.5 409.3V412.5M583.5 408.5V412.5M585.5 408.1V412.5M587.5 407.7V412.5M589.5 407.6V412.5M591.5 407.9V412.5M593.5 408.2V412.5M595.5 408.5V412.5M597.5 409.3V412.5M599.5 410.1V412.5M601.5 410.8V412.5M603.5 411.2V412.5M605.5 411.6V412.5M607.5 411.8V412.5M609.5 412.2V412.5M629.5 412.1V412.5M631.5 411.9V412.5M633.5 411.9V412.5M635.5 411.9V412.5M637.5 411.9V412.5M639.5 411.9V412.5M641.5 411.9V412.5M643.5 411.9V412.5" stroke="#f01010" stroke-width="1" shape-rendering="crispEdges"/>
<polyline points="0,423.3 9.9,422.5 19.8,421.7 29.8,420 39.7,415.1 49.6,412.6 59.5,410.9 71.1,410.9 77.7,413.4 86,415.9 94.3,415.9 99.2,412.6 105.9,406.8 112.5,403.5 119.1,403.5 124,406 125,412.6 131.6,415.9 138.2,418.4 144.8,418.4 151.5,415.1 158.1,408.4 163,404.3 168,409.3 173,407.6 177.9,402.7 182.9,391.1 187.9,379.5 192.8,369.6 197.8,365.4 204.4,366.3 211,365.4 217.6,367.1 224.2,370.4 232.5,374.5 240.8,379.5 247.4,387.8 250,391.1 255,397.7 259.9,402.7 266.5,406 273.2,410.9 279.8,415.1 285.6,420 289.7,420 294.7,414.2 299.6,406.8 306.2,405.1 312.9,401.8 319.5,396.9 326.1,387.8 332.7,380.3 339.3,377 345.9,379.5 352.5,384.5 359.2,389.4 365.8,396 372.4,404.3 375,409.3 381.6,412.6 389.9,412.6 398.2,410.9 408.1,406.8 416.3,406 424.6,401 431.2,393.6 437.9,389.4 444.5,388.6 451.1,388.6 456,391.1 462.7,397.7 469.3,401.8 477.5,405.1 484.2,407.6 490.8,412.6 497.4,417.5 500,419.1 508.1,422.1 518.3,424.2 528.5,421.1 536.6,416 544.8,411.9 552.9,419.1 561.1,424.2 571.2,427.2 581.4,424.2 591.6,420.1 601.8,418.1 614,418.1 622.1,420.1 630.3,419.1 641.1,419.1" fill="none" stroke="#1c1cf8" stroke-width="1.1"/>
<polyline points="0,425.8 6.6,425 16.5,422.5 26.5,421.7 36.4,418.4 46.3,415.1 56.2,411.8 66.2,410.9 76.1,411.8 86,414.2 95.9,415.9 102.5,413.4 109.2,410.1 115.8,406 122.4,405.1 125,406 131.6,410.9 139.9,415.9 148.2,417.5 154.8,415.1 161.4,410.9 168,408.4 174.6,407.6 181.2,404.3 186.2,399.3 191.2,391.1 196.1,379.5 201.1,371.2 207.7,367.1 214.3,366.3 222.6,367.1 230.9,369.6 239.1,372.9 245.7,377.8 250,381.2 256.6,389.4 263.2,396 269.8,401.8 276.5,406.8 283.1,412.6 289.7,417.5 296.3,418.4 302.9,413.4 309.5,407.6 316.2,402.7 322.8,399.3 329.4,392.7 336,386.1 342.6,380.3 349.2,378.7 355.9,380.3 362.5,385.3 369.1,391.1 375,397.7 380,404.3 384.9,410.9 391.5,413.4 399.8,412.6 408.1,409.3 416.3,407.6 424.6,405.1 432.9,400.2 441.2,393.6 447.8,389.4 454.4,389.4 461,391.1 467.6,395.2 474.2,399.3 482.5,403.5 490.8,408.4 497.4,412.6 500,416 508.1,419.1 516.3,422.1 524.4,423.1 532.6,421.1 540.7,417 548.9,415 555,418.1 563.1,423.1 573.3,426.2 583.5,426.2 593.6,422.1 603.8,418.7 614,417.6 622.1,418.1 632.3,419.1 641.1,418.7" fill="none" stroke="#f828f8" stroke-width="1.1"/>
<polyline points="0,391.1 3.3,388.6 7.4,389.4 11.6,401 16.5,415.9 19.8,420.9 23.2,404.3 26.5,391.1 30.6,387.8 33.9,376.2 38,368.8 42.2,370.4 45.5,386.1 48.8,402.7 52.9,406.8 56.2,393.6 58.7,389.4 62.9,402.7 66.2,398.5 69.5,401 72.8,422.5 75.3,425 78.6,414.2 81.9,415.9 84.4,420 87.7,416.7 92.6,417.5 95.9,404.3 99.2,379.5 102.5,373.7 106.7,377.8 110,371.2 114.1,374.5 118.3,379.5 122.4,396 125,410.9 127.5,401 130.8,394.4 135.8,401.8 139.9,391.1 144.8,386.1 149.8,377.8 153.9,371.2 158.1,368.8 162.2,376.2 165.5,399.3 169.3,421.7 172.1,399.3 175.4,374.5 179.6,367.1 182.9,364.6 187,367.9 191.2,374.5 196.1,365.4 199.4,381.2 205.2,390.3 209.4,382.8 213.5,375.4 217.6,380.3 221.8,382.8 225.9,377.8 230,376.2 235,377.8 239.1,376.2 242.4,386.1 245.7,401 250,410.9 253.3,405.1 256.6,412.6 259.9,407.6 262.4,401.8 266.5,412.6 269.8,421.7 274.8,412.6 279.8,401.8 283.1,417.5 285.6,421.7 288.9,399.3 292.2,374.5 296.3,365.4 299.6,366.3 302.9,379.5 306.2,382.8 310.4,377.8 314.5,372.9 317.8,373.7 321.1,378.7 325.3,370.4 329.4,368.8 333.5,364.6 337.7,367.9 341.8,369.6 345.9,376.2 349.2,388.6 354.2,381.2 358.3,394.4 362.5,407.6 365.8,415.9 370.7,414.2 375,420.9 378.3,425.8 380.8,424.2 384.1,407.6 387.4,386.1 391.5,367.9 394,374.5 397.3,382 402.3,374.5 407.3,368.8 411.4,384.5 414.7,396 418,382.8 421.3,369.6 425.4,363.8 429.6,370.4 432.1,374.5 437,367.1 441.2,379.5 446.1,373.7 450.3,379.5 453.6,387.8 456.9,401 461,407.6 464.3,420.9 467.6,429.1 470.9,422.5 475.1,419.2 479.2,414.2 482.5,406 487.5,414.2 492.4,422.5 497.4,423.3 500,423.1 503.1,413 507.1,411.9 511.2,418.1 516.3,417 520.4,417 524.4,406.9 528.5,390.6 533.6,374.3 537.7,364.1 541.7,366.1 545.8,380.4 548.9,415 551.9,427.2 556,421.1 560.1,425.2 563.1,419.1 567.2,415 571.2,420.1 575.3,406.9 579.4,390.6 583.5,379.4 588.5,379.4 593.6,381.4 597.7,378.4 601.8,392.6 605.9,398.7 609.9,407.9 615,410.9 619.1,427.2 623.2,417 627.2,391.6 631.3,383.4 637.4,391.6 641.1,386.5" fill="none" stroke="#22bcb4" stroke-width="1.05"/>
<polyline points="0,388.6 6.6,390.3 9.9,396 16.5,412.6 20.7,418.4 24.8,406 28.1,393.6 33.1,386.1 37.2,376.2 40.5,370.4 43,372.1 46.3,387.8 49.6,399.3 52.9,406.8 57.1,399.3 61.2,390.3 63.7,397.7 67.8,400.2 71.1,401.8 73.6,414.2 76.9,423.3 79.4,420 82.7,415.1 86,418.4 90.1,415.9 94.3,416.7 97.6,406 100.1,387.8 103.4,376.2 107.5,375.4 112.5,371.2 115.8,373.7 120.7,382.8 124,396 125,401 127.5,406 131.6,397.7 136.6,393.6 141.5,387.8 146.5,382.8 151.5,374.5 156.4,368.8 161.4,370.4 163.9,376.2 166.3,391.1 168.8,406 171.3,410.9 173.8,399.3 177.1,377.8 181.2,367.1 185.4,365.4 189.5,369.6 193.6,376.2 197.8,373.7 201.9,382.8 206.9,388.6 211,384.5 215.1,376.2 219.3,377.8 223.4,382 228.4,376.2 232.5,378.7 237.5,375.4 241.6,378.7 244.1,387.8 247.4,401 250,412.6 253.3,409.3 257.4,414.2 261.6,407.6 264.9,405.1 269,412.6 273.2,418.4 277.3,410.9 280.6,406.8 284.7,415.9 288,414.2 291.3,391.1 294.7,374.5 298.8,366.3 302.9,376.2 307.1,383.6 311.2,379.5 316.2,373.7 321.1,375.4 326.1,371.2 331,367.9 336,366.3 340.1,370.4 344.3,372.1 347.6,381.2 352.5,386.9 356.7,384.5 360.8,393.6 365.8,410.9 370.7,415.9 375,415.9 378.3,422.5 381.6,424.2 384.9,412.6 388.2,391.1 391.5,374.5 394,372.1 398.2,379.5 403.1,376.2 408.9,372.1 412.2,381.2 416.3,391.9 419.7,379.5 423,368.8 426.3,365.4 431.2,372.9 436.2,367.9 440.3,372.1 444.5,377 449.4,374.5 452.7,382.8 456,391.1 459.4,401 464.3,410.9 468.5,425.8 472.6,421.7 475.9,418.4 480,419.2 484.2,407.6 489.1,412.6 494.1,421.7 499,424.2 500,421.1 504.1,416 509.2,417 514.2,419.1 519.3,418.1 523.4,416 527.5,404.8 532.6,386.5 537.7,371.2 541.7,365.1 545.8,372.2 548.9,398.7 551.9,419.1 556,423.1 561.1,424.2 565.1,417 569.2,414 573.3,417 577.4,402.8 581.4,386.5 586.5,379.4 591.6,379.4 596.7,378.4 600.8,384.5 604.8,395.7 609.9,403.8 616,411.9 621.1,424.2 625.2,410.9 629.3,390.6 633.3,384.5 638.4,389.6 641.1,387.5" fill="none" stroke="#f81818" stroke-width="1.05"/>
<g stroke="#fff" stroke-width="1" fill="none" shape-rendering="crispEdges">
<path d="M0 30.5H742.5V283.5H0"/>
<path d="M0 286.5H742.5V358.5H0"/>
<path d="M0 360.5H742.5V430.5H0"/>
<path d="M742 51.5H746M742 84.5H746M742 116.5H746M742 149.5H746M742 182.5H746M742 214.5H746M742 247.5H746M742 280.5H746M742 340.5H746M742 412.5H746M742 287.5H745M742 357.5H745M742 361.5H745M742 429.5H745M61.5 431V434M125.5 431V434M189.5 431V434M253.5 431V434M317.5 431V434M381.5 431V434M445.5 431V434M509.5 431V434M573.5 431V434M637.5 431V434"/>
</g>
<rect x="782" y="28" width="1" height="422" fill="#b4c4dc"/><rect x="783" y="28" width="3" height="422" fill="#c6cad4"/>
<g font-family="Liberation Sans, sans-serif" font-size="9.7" fill="#fff" stroke="#fff" stroke-width="0.2">
<text transform="translate(748 54.1) scale(0.915 1)">1.7670</text>
<text transform="translate(748 86.8) scale(0.915 1)">1.7635</text>
<text transform="translate(748 119.5) scale(0.915 1)">1.7600</text>
<text transform="translate(748 152.2) scale(0.915 1)">1.7565</text>
<text transform="translate(748 184.9) scale(0.915 1)">1.7530</text>
<text transform="translate(748 217.7) scale(0.915 1)">1.7495</text>
<text transform="translate(748 250.4) scale(0.915 1)">1.7460</text>
<text transform="translate(748 283.1) scale(0.915 1)">1.7425</text>
<text transform="translate(746 296.6) scale(0.915 1)">0.00667</text>
<text transform="translate(746 342.9) scale(0.915 1)">0.00</text>
<text transform="translate(746 355.1) scale(0.915 1)">-0.00229</text>
<text transform="translate(746 370.7) scale(0.915 1)">0.0024</text>
<text transform="translate(745 377.9) scale(0.915 1)">80</text>
<text transform="translate(746 414.7) scale(0.915 1)">0.00</text>
<text transform="translate(745 420.3) scale(0.915 1)">20</text>
<text transform="translate(746 427.6) scale(0.915 1)">-0.00088</text>
<text transform="translate(1 41.6) scale(0.948 1)">GBPUSD,M5</text><text transform="translate(62 41.6) scale(0.915 1)">1.7605</text><text transform="translate(93 41.6) scale(0.915 1)">1.7605</text><text transform="translate(124 41.6) scale(0.915 1)">1.7602</text><text transform="translate(155 41.6) scale(0.915 1)">1.7603</text>
<text transform="translate(1 299.7) scale(0.948 1)">AO -0.00056</text>
<text transform="translate(1 374.1) scale(0.948 1)">MACD(12,26,9)</text>
<text transform="translate(70.6 374.1) scale(0.915 1)">-0.00029</text>
<text transform="translate(110.6 374.1) scale(0.915 1)">-0.00033</text>
<text transform="translate(148 374.1) scale(0.915 1)">0.00006</text>
<text transform="translate(183.7 374.1) scale(0.915 1)">0.00000</text>
<text transform="translate(223.3 374.1) scale(0.948 1)">Stoch(11,3,3)</text>
<text transform="translate(280.6 374.1) scale(0.915 1)">66.6667</text>
<text transform="translate(316.5 374.1) scale(0.915 1)">51.5173</text>
<text transform="translate(-2.5 444.3) scale(0.948 1)">19 Oct 2005</text>
<text transform="translate(61.5 444.3) scale(0.948 1)">19 Oct 05:50</text>
<text transform="translate(125.5 444.3) scale(0.948 1)">19 Oct 08:35</text>
<text transform="translate(189.5 444.3) scale(0.948 1)">19 Oct 11:15</text>
<text transform="translate(253.5 444.3) scale(0.948 1)">19 Oct 13:55</text>
<text transform="translate(317.5 444.3) scale(0.948 1)">19 Oct 16:35</text>
<text transform="translate(381.5 444.3) scale(0.948 1)">19 Oct 19:15</text>
<text transform="translate(445.5 444.3) scale(0.948 1)">19 Oct 21:55</text>
<text transform="translate(509.5 444.3) scale(0.948 1)">20 Oct 00:35</text>
<text transform="translate(573.5 444.3) scale(0.948 1)">20 Oct 03:15</text>
<text transform="translate(637.5 444.3) scale(0.948 1)">20 Oct 05:55</text>
</g>
<rect x="744" y="108" width="34.5" height="11" fill="#fff"/>
<text transform="translate(748 116.9) scale(0.915 1)" font-family="Liberation Sans, sans-serif" font-size="9.7" fill="#000">1.7603</text>
<path d="M587 31H596L591.5 36Z" fill="#8fa3b8"/>
<path d="M139.1 50.4L154 59L151.5 66.5H142.8L141.2 61.6Z" fill="#2f80bc"/><path d="M139.1 50.4L146.5 66.5H142.8L141.2 61.6Z" fill="#4fb4d6"/><path d="M146.5 66.5L151.5 66.5L154 59L148 61Z" fill="#3d9cc0"/><path d="M141.6 62.7L150.6 57.3" stroke="#e4f4ff" stroke-width="1.3"/>
</svg><div id="tabs">
<div id="tline"></div>
<div id="atab"></div>
 <span class="tab" style="left:6.6px">USDJPY,H4</span>
 <span class="tab" style="left:82.2px">USDCHF,H4</span>
 <span class="tab" style="left:162.8px;color:#000">GBPUSD,M5</span>
 <span class="tab" style="left:242.2px">EURUSD,H4</span>
 <span class="tab" style="left:322.6px">USDCAD,H4</span>
 <span class="tab" style="left:402.6px">AUDUSD,H4</span>
 <span class="tab" style="left:482.2px">EURUSD,H1</span>
 <span class="tab" style="left:563.8px">GBPUSD,H1</span>
 <span class="tab" style="left:642.9px">AUDUSD,H1</span>
 <div class="tsep" style="left:72px"></div>
 <div class="tsep" style="left:308px"></div>
 <div class="tsep" style="left:392px"></div>
 <div class="tsep" style="left:470px"></div>
 <div class="tsep" style="left:552px"></div>
 <div class="tsep" style="left:633px"></div>
 <div class="tsep" style="left:712px"></div>
 <svg width="40" height="12" style="position:absolute;left:748px;top:5px"><path d="M11.5 2.5L8 6L11.5 9.5Z M26 2.5L29.5 6L26 9.5Z" fill="#9a9584"/></svg>
</div>
<div id="status">
 <svg width="80" height="10" viewBox="0 472 80 10" style="position:absolute;left:0;top:-1px" fill="none" stroke="#151515" stroke-width="1" shape-rendering="crispEdges">
  <path d="M0 478.5H5M4.5 478V482M0 480.5H4"/>
  <path d="M6 479.5H16M11.5 477V482M14 477.5h1.5M7 481.5h2M14 481.5h2"/>
  <path d="M17 478.5H23.5M17 480.5H23.5M20.5 477V482M24.5 477.5H28.5V481H25M24.5 477V482"/>
  <path d="M29.5 477.5H34.5V482M29.5 477.5V482M29.5 479.5H34.5M35.5 479.5H41.5V482M38.5 477V482"/>
  <path d="M43 481.5h1M46 477.5h2M46 480.5H48.5V482M50 477.5H57.5M50.5 479.5H57M50 481.5H57.5M53.5 477V481"/>
  <path d="M58 479.5H62M60.5 477V482M65 477h1.5M62.5 478.5H68.5M62.5 478.5v1.5M68.5 478.5v1.5M64 481.5H68"/>
  <path d="M70.5 477.5V482M70.5 477.5H75M70.5 480.5H74"/>
 </svg>
 <div class="ssep" style="left:79px"></div>
 <span class="st" style="left:85px">Default</span>
 <div class="ssep" style="left:189px"></div>
 <div class="ssep" style="left:291px"></div>
 <span class="st" style="left:295px">O: 1.7453</span>
 <div class="ssep" style="left:362px"></div>
 <span class="st" style="left:366px">H: 1.7458</span>
 <div class="ssep" style="left:433px"></div>
 <span class="st" style="left:437px">L: 1.7448</span>
 <div class="ssep" style="left:503px"></div>
 <span class="st" style="left:507px">C: 1.7457</span>
 <div class="ssep" style="left:573px"></div>
 <span class="st" style="left:578px">V: 86</span>
 <div class="ssep" style="left:638px"></div>
 <svg width="30" height="10" style="position:absolute;left:643px;top:0"><path d="M1.5 1v9M3.5 1v9M5.5 1v9M7.5 1v9M9.5 1v9M11.5 1v9M13.5 1v9M15.5 1v9M17.5 1v9M19.5 1v9" stroke="#4a7a18" stroke-width="1"/><path d="M21.5 5v5M23.5 6v4" stroke="#c02020"/></svg>
 <span class="st" style="left:690px">66/0 kb</span>
</div>
</body></html>
